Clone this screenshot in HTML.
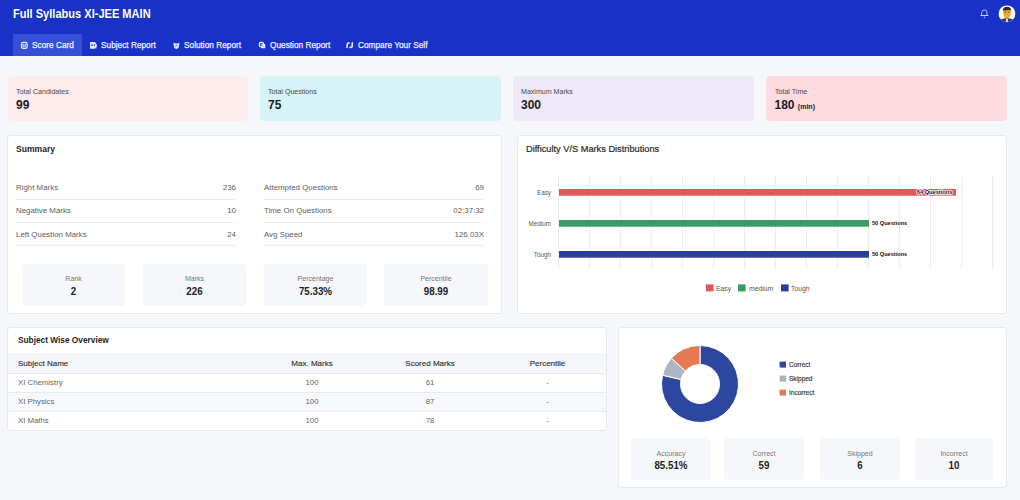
<!DOCTYPE html>
<html><head><meta charset="utf-8">
<style>
*{box-sizing:border-box;margin:0;padding:0}
html,body{width:1020px;height:500px;overflow:hidden}
body{background:#F5F7FB;font-family:"Liberation Sans",sans-serif;position:relative;color:#222}
.a{position:absolute}
.t{position:absolute;line-height:1;white-space:nowrap;transform-origin:0 0}
.c{position:absolute;line-height:1;white-space:nowrap;text-align:center}
.hdr{left:0;top:0;width:1020px;height:55.5px;background:#1832C8}
.tab{top:40.7px;color:#eef0ff;font-size:9px;transform:scaleX(0.92);-webkit-text-stroke:0.25px #eef0ff}
.stat{top:76px;height:44.5px;border-radius:4px}
.slab{top:87.5px;font-size:7.4px;color:#4a4a4a;transform:scaleX(0.957)}
.sval{top:98.8px;font-size:12px;font-weight:bold;color:#1c1c1c}
.card{background:#fff;border:1px solid #E7E9EE;border-radius:3px}
.row{font-size:7.9px;color:#5e5e5e}
.hr{height:1px;background:#E9EAEE}
.box{background:#F6F7FB;border-radius:4px}
.blab{font-size:7px;color:#777}
.trow{font-size:7.8px;color:#666}
.bval{font-size:10.5px;font-weight:bold;color:#222;transform:scaleX(0.93)}
</style></head>
<body>
<div class="a hdr"></div>
<div class="t" style="left:13px;top:7.9px;font-size:12.6px;font-weight:bold;color:#fff;transform:scaleX(0.878)">Full Syllabus XI-JEE MAIN</div>

<div class="a" style="left:12.5px;top:34px;width:69.5px;height:21.5px;background:#3550D6"></div>
<div class="t tab" style="left:32px">Score Card</div>
<div class="t tab" style="left:101px">Subject Report</div>
<div class="t tab" style="left:184px">Solution Report</div>
<div class="t tab" style="left:269.5px">Question Report</div>
<div class="t tab" style="left:357.5px">Compare Your Self</div>


<!-- tab icons -->
<svg class="a" style="left:0;top:0" width="420" height="55" viewBox="0 0 420 55">
  <g fill="none" stroke="#E8EBFF" stroke-width="1.25">
    <rect x="21.5" y="42.4" width="5.6" height="5.9" rx="1.6"/>
  </g>
  <g fill="#E8EBFF">
    <rect x="22.6" y="43.8" width="1.1" height="3.6"/>
    <rect x="24.5" y="43.8" width="1.1" height="3.6"/>
    <path d="M25.2,43.7 L26.4,44.9 L25.6,45.4 Z"/>
  </g>
  <g fill="#E8EBFF">
    <path d="M90,42 H95 L96.8,44.8 V48.8 H90 Z"/>
  </g>
  <g fill="#1832C8">
    <rect x="91.2" y="44.5" width="1.6" height="1.4"/>
    <rect x="93.8" y="44.5" width="1.2" height="1.4"/>
    <path d="M94.8,48.8 L96.8,47 V48.8Z"/>
  </g>
  <g fill="#E8EBFF">
    <path d="M173.4,42.5 L175,43.6 H177.8 L179.4,42.5 L179,45.5 Q179,48.6 176.4,48.9 Q173.8,48.6 173.8,45.5Z"/>
  </g>
  <path d="M175.2,46.3 Q176.4,44.4 177.6,46.3" fill="none" stroke="#1832C8" stroke-width="0.9"/>
  <g fill="none" stroke="#E8EBFF" stroke-width="1.3">
    <rect x="259.4" y="42.5" width="4" height="4" rx="0.9"/>
    <path d="M261.4,44.6 L264.6,44.6 L264.6,47.6 L261,47.6"/>
  </g>
  <g fill="none" stroke="#E8EBFF" stroke-width="1.6" stroke-linecap="round">
    <path d="M347,47.4 L347.3,43.9 Q347.6,42.9 349,42.9"/>
    <path d="M352.3,42.8 L352.2,46.4 Q351.9,47.4 350.2,47.4"/>
  </g>
</svg>
<!-- bell -->
<svg class="a" style="left:976px;top:6px" width="16" height="16" viewBox="0 0 16 16">
  <path d="M5.7,9.4 V6.6 Q5.7,3.9 8.4,3.9 Q11,3.9 11,6.6 V9.4" fill="none" stroke="#AEBBFF" stroke-width="1"/>
  <path d="M4.8,9.5 H12" stroke="#C8D2FF" stroke-width="1.1" stroke-linecap="round"/>
  <circle cx="8.4" cy="11.2" r="0.7" fill="#AEBBFF"/>
</svg>
<!-- avatar -->
<svg class="a" style="left:997px;top:4px" width="20" height="20" viewBox="0 0 20 20">
  <defs><clipPath id="av"><circle cx="10" cy="9.8" r="8.3"/></clipPath></defs>
  <circle cx="10" cy="9.8" r="8.4" fill="#FFFFFF"/>
  <g clip-path="url(#av)">
    <path d="M2,20 L4,15.5 Q10,13 16,15.5 L18,20Z" fill="#2B3566"/>
    <path d="M9.2,15 H10.8 V19 H9.2Z" fill="#fff"/>
    <path d="M6.2,6 Q6.4,4 10,3.8 Q13.6,4 13.8,6 L13.6,10.5 Q12.8,14.2 10,14.6 Q7.2,14.2 6.4,10.5Z" fill="#F2A531"/>
    <path d="M5.8,7.2 Q5.8,2.8 10,2.8 Q14.2,2.8 14.2,7.2 L13.4,6.2 Q11,5.4 8.2,6.6 L6.6,6.2Z" fill="#3A2A1A"/>
    <path d="M6.8,8.2 H9.2 M10.8,8.2 H13.2" stroke="#6B4A2A" stroke-width="0.6"/>
  </g>
</svg>

<!-- stat cards -->
<div class="a stat" style="left:8px;width:240px;background:#FFEBEB"></div>
<div class="a stat" style="left:260px;width:241px;background:#D6F4F8"></div>
<div class="a stat" style="left:513px;width:241px;background:#EDE9F8"></div>
<div class="a stat" style="left:766px;width:240.5px;background:#FDDBE1"></div>
<div class="t slab" style="left:16px">Total Candidates</div>
<div class="t sval" style="left:16px">99</div>
<div class="t slab" style="left:268px">Total Questions</div>
<div class="t sval" style="left:268px">75</div>
<div class="t slab" style="left:521px">Maximum Marks</div>
<div class="t sval" style="left:521px">300</div>
<div class="t slab" style="left:774.5px">Total Time</div>
<div class="t sval" style="left:774.5px">180 <span style="font-size:7px">(min)</span></div>

<!-- cards -->
<div class="a card" style="left:7px;top:135px;width:495px;height:179px"></div>
<div class="a card" style="left:517px;top:135px;width:490px;height:178.5px"></div>
<div class="a card" style="left:7px;top:327px;width:600px;height:104px"></div>
<div class="a card" style="left:618px;top:327px;width:389px;height:161px"></div>

<!-- summary -->
<div class="t" style="left:16px;top:144.5px;font-size:9px;font-weight:bold;color:#222;transform:scaleX(0.95)">Summary</div>
<div class="t row" style="left:16px;top:184px">Right Marks</div>
<div class="t row" style="left:16px;top:207.3px">Negative Marks</div>
<div class="t row" style="left:16px;top:230.7px">Left Question Marks</div>
<div class="t row" style="left:196px;width:40px;text-align:right;top:184px">236</div>
<div class="t row" style="left:196px;width:40px;text-align:right;top:207.3px">10</div>
<div class="t row" style="left:196px;width:40px;text-align:right;top:230.7px">24</div>
<div class="a hr" style="left:16px;top:199px;width:220px"></div>
<div class="a hr" style="left:16px;top:222px;width:220px"></div>
<div class="a hr" style="left:16px;top:245px;width:220px"></div>
<div class="t row" style="left:264px;top:184px">Attempted Questions</div>
<div class="t row" style="left:264px;top:207.3px">Time On Questions</div>
<div class="t row" style="left:264px;top:230.7px">Avg Speed</div>
<div class="t row" style="left:404px;width:80px;text-align:right;top:184px">69</div>
<div class="t row" style="left:404px;width:80px;text-align:right;top:207.3px">02:37:32</div>
<div class="t row" style="left:404px;width:80px;text-align:right;top:230.7px">126.03X</div>
<div class="a hr" style="left:264px;top:199px;width:220px"></div>
<div class="a hr" style="left:264px;top:222px;width:220px"></div>
<div class="a hr" style="left:264px;top:245px;width:220px"></div>

<div class="a box" style="left:22px;top:264px;width:103px;height:42px"></div>
<div class="a box" style="left:143px;top:264px;width:103px;height:42px"></div>
<div class="a box" style="left:264px;top:264px;width:103px;height:42px"></div>
<div class="a box" style="left:384px;top:264px;width:104px;height:42px"></div>
<div class="c blab" style="left:22px;width:103px;top:275.2px">Rank</div>
<div class="c bval" style="left:22px;width:103px;top:286.4px">2</div>
<div class="c blab" style="left:143px;width:103px;top:275.2px">Marks</div>
<div class="c bval" style="left:143px;width:103px;top:286.4px">226</div>
<div class="c blab" style="left:264px;width:103px;top:275.2px">Percentage</div>
<div class="c bval" style="left:264px;width:103px;top:286.4px">75.33%</div>
<div class="c blab" style="left:384px;width:104px;top:275.2px">Percentile</div>
<div class="c bval" style="left:384px;width:104px;top:286.4px">98.99</div>

<!-- difficulty chart -->
<div class="t" style="left:525.7px;top:145px;font-size:8.9px;color:#2a2a2a;transform:scaleX(1.04);-webkit-text-stroke:0.2px #2a2a2a">Difficulty V/S Marks Distributions</div>

<!-- subject wise -->
<div class="t" style="left:18px;top:335.9px;font-size:8.5px;font-weight:bold;color:#1e1e1e;transform:scaleX(0.976)">Subject Wise Overview</div>
<div class="a" style="left:8px;top:353px;width:598px;height:20px;background:#F5F6FA"></div>
<div class="a" style="left:8px;top:392px;width:598px;height:19.5px;background:#F7F8FB"></div>
<div class="a hr" style="left:8px;top:373px;width:598px"></div>
<div class="a hr" style="left:8px;top:392px;width:598px"></div>
<div class="a hr" style="left:8px;top:411px;width:598px"></div>

<!-- pie card -->
<div class="a box" style="left:631px;top:438px;width:80px;height:42px"></div>
<div class="a box" style="left:724px;top:438px;width:80px;height:42px"></div>
<div class="a box" style="left:820px;top:438px;width:80px;height:42px"></div>
<div class="a box" style="left:915px;top:438px;width:78px;height:42px"></div>

<!-- table text -->
<div class="t" style="left:18px;top:359.5px;font-size:8px;color:#333;-webkit-text-stroke:0.15px #333">Subject Name</div>
<div class="c" style="left:253px;width:118px;top:359.5px;font-size:8px;color:#333;-webkit-text-stroke:0.15px #333">Max. Marks</div>
<div class="c" style="left:371px;width:118px;top:359.5px;font-size:8px;color:#333;-webkit-text-stroke:0.15px #333">Scored Marks</div>
<div class="c" style="left:489px;width:117px;top:359.5px;font-size:8px;color:#333;-webkit-text-stroke:0.15px #333">Percentile</div>
<div class="t trow" style="left:18px;top:379.1px">XI Chemistry</div>
<div class="c trow" style="left:253px;width:118px;top:379.1px">100</div>
<div class="c trow" style="left:371px;width:118px;top:379.1px">61</div>
<div class="c trow" style="left:489px;width:117px;top:379.1px">-</div>
<div class="t trow" style="left:18px;top:398.3px">XI Physics</div>
<div class="c trow" style="left:253px;width:118px;top:398.3px">100</div>
<div class="c trow" style="left:371px;width:118px;top:398.3px">87</div>
<div class="c trow" style="left:489px;width:117px;top:398.3px">-</div>
<div class="t trow" style="left:18px;top:417.3px">XI Maths</div>
<div class="c trow" style="left:253px;width:118px;top:417.3px">100</div>
<div class="c trow" style="left:371px;width:118px;top:417.3px">78</div>
<div class="c trow" style="left:489px;width:117px;top:417.3px">-</div>

<!-- pie boxes text -->
<div class="c blab" style="left:631px;width:80px;top:449.6px">Accuracy</div>
<div class="c bval" style="left:631px;width:80px;top:460.1px">85.51%</div>
<div class="c blab" style="left:724px;width:80px;top:449.6px">Correct</div>
<div class="c bval" style="left:724px;width:80px;top:460.1px">59</div>
<div class="c blab" style="left:820px;width:80px;top:449.6px">Skipped</div>
<div class="c bval" style="left:820px;width:80px;top:460.1px">6</div>
<div class="c blab" style="left:915px;width:78px;top:449.6px">Incorrect</div>
<div class="c bval" style="left:915px;width:78px;top:460.1px">10</div>

<svg class="a" style="left:0;top:0" width="1020" height="500" viewBox="0 0 1020 500">
  <g stroke="#ECECEC" stroke-width="1">
    <line x1="558.6" y1="176" x2="558.6" y2="269.5"/>
<line x1="589.6" y1="176" x2="589.6" y2="269.5"/>
<line x1="620.6" y1="176" x2="620.6" y2="269.5"/>
<line x1="651.6" y1="176" x2="651.6" y2="269.5"/>
<line x1="682.6" y1="176" x2="682.6" y2="269.5"/>
<line x1="713.6" y1="176" x2="713.6" y2="269.5"/>
<line x1="744.6" y1="176" x2="744.6" y2="269.5"/>
<line x1="775.6" y1="176" x2="775.6" y2="269.5"/>
<line x1="806.6" y1="176" x2="806.6" y2="269.5"/>
<line x1="837.6" y1="176" x2="837.6" y2="269.5"/>
<line x1="868.6" y1="176" x2="868.6" y2="269.5"/>
<line x1="899.6" y1="176" x2="899.6" y2="269.5"/>
<line x1="930.6" y1="176" x2="930.6" y2="269.5"/>
<line x1="961.6" y1="176" x2="961.6" y2="269.5"/>
<line x1="992.6" y1="176" x2="992.6" y2="269.5"/>
  </g>
  <rect x="559" y="189" width="397" height="6.7" fill="#E05858"/>
  <rect x="559" y="220" width="310" height="6.7" fill="#3E9A64"/>
  <rect x="559" y="251" width="310" height="6.7" fill="#2A3E9C"/>
  <g font-family="Liberation Sans" font-size="6.3" fill="#555" text-anchor="end">
    <text x="551" y="194.5">Easy</text>
    <text x="551" y="225.5">Medium</text>
    <text x="551" y="256.5">Tough</text>
  </g>
  <g font-family="Liberation Sans" font-size="6.1" fill="#111" font-weight="bold">
    <text x="952.4" y="194.4" text-anchor="end" stroke="#fff" stroke-width="1.5" paint-order="stroke" stroke-linejoin="round" textLength="35.6" lengthAdjust="spacingAndGlyphs">64 Questions</text>
    <text x="872" y="225.4" textLength="35.2" lengthAdjust="spacingAndGlyphs">50 Questions</text>
    <text x="872" y="256.4" textLength="35.2" lengthAdjust="spacingAndGlyphs">50 Questions</text>
  </g>
  <rect x="706" y="284.4" width="7.6" height="7" fill="#E05858"/>
  <rect x="738" y="284.4" width="7.6" height="7" fill="#3E9A64"/>
  <rect x="781" y="284.4" width="7.6" height="7" fill="#2A3E9C"/>
  <g font-family="Liberation Sans" font-size="6.8" fill="#555">
    <text x="716" y="290.6">Easy</text>
    <text x="749" y="290.6">medium</text>
    <text x="791" y="290.6">Tough</text>
  </g>
  <path d="M700.00,345.50 A38.5,38.5 0 1 1 662.52,375.21 L681.02,379.55 A19.5,19.5 0 1 0 700.00,364.50 Z" fill="#2D46A0" stroke="#fff" stroke-width="1"/>
<path d="M662.52,375.21 A38.5,38.5 0 0 1 671.39,358.24 L685.51,370.95 A19.5,19.5 0 0 0 681.02,379.55 Z" fill="#AEB4C4" stroke="#fff" stroke-width="1"/>
<path d="M671.39,358.24 A38.5,38.5 0 0 1 700.00,345.50 L700.00,364.50 A19.5,19.5 0 0 0 685.51,370.95 Z" fill="#E57A50" stroke="#fff" stroke-width="1"/>
  <rect x="779.6" y="361.6" width="6.4" height="6" fill="#2D46A0"/>
  <rect x="779.6" y="375.6" width="6.4" height="6" fill="#AEB4C4"/>
  <rect x="779.6" y="389.6" width="6.4" height="6" fill="#E57A50"/>
  <g font-family="Liberation Sans" font-size="6.5" fill="#333" stroke="#333" stroke-width="0.15">
    <text x="789" y="367.2">Correct</text>
    <text x="789" y="381.2">Skipped</text>
    <text x="789" y="395.2">Incorrect</text>
  </g>
</svg>
</body></html>
